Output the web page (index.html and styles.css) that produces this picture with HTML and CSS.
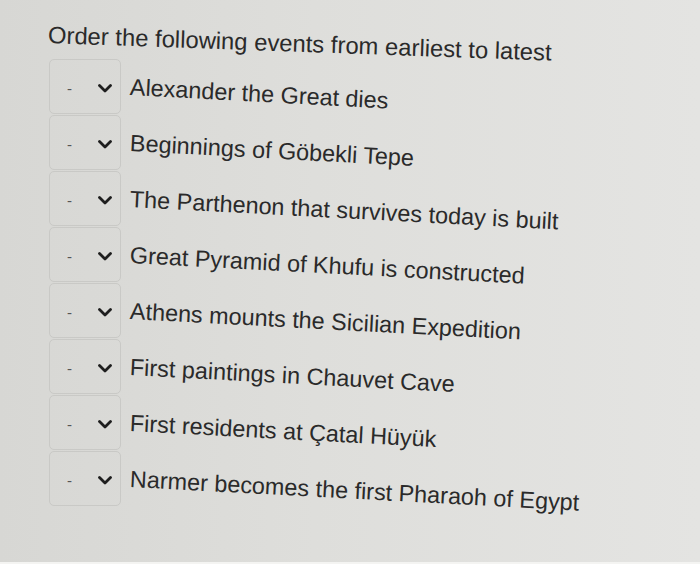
FILE: index.html
```html
<!DOCTYPE html>
<html lang="en">
<head>
<meta charset="utf-8">
<title>Order events</title>
<link rel="stylesheet" href="styles.css">
</head>
<body>
<main class="page">
  <h1 class="question">Order the following events from earliest to latest</h1>
  <ul class="items">
    <li class="item"><span class="select"><span class="dash">-</span><svg class="chev" viewBox="0 0 14 9" width="14" height="9"><polyline points="1.5,1.5 7,7 12.5,1.5"/></svg></span><span class="label">Alexander the Great dies</span></li>
    <li class="item"><span class="select"><span class="dash">-</span><svg class="chev" viewBox="0 0 14 9" width="14" height="9"><polyline points="1.5,1.5 7,7 12.5,1.5"/></svg></span><span class="label">Beginnings of Göbekli Tepe</span></li>
    <li class="item"><span class="select"><span class="dash">-</span><svg class="chev" viewBox="0 0 14 9" width="14" height="9"><polyline points="1.5,1.5 7,7 12.5,1.5"/></svg></span><span class="label">The Parthenon that survives today is built</span></li>
    <li class="item"><span class="select"><span class="dash">-</span><svg class="chev" viewBox="0 0 14 9" width="14" height="9"><polyline points="1.5,1.5 7,7 12.5,1.5"/></svg></span><span class="label">Great Pyramid of Khufu is constructed</span></li>
    <li class="item"><span class="select"><span class="dash">-</span><svg class="chev" viewBox="0 0 14 9" width="14" height="9"><polyline points="1.5,1.5 7,7 12.5,1.5"/></svg></span><span class="label">Athens mounts the Sicilian Expedition</span></li>
    <li class="item"><span class="select"><span class="dash">-</span><svg class="chev" viewBox="0 0 14 9" width="14" height="9"><polyline points="1.5,1.5 7,7 12.5,1.5"/></svg></span><span class="label">First paintings in Chauvet Cave</span></li>
    <li class="item"><span class="select"><span class="dash">-</span><svg class="chev" viewBox="0 0 14 9" width="14" height="9"><polyline points="1.5,1.5 7,7 12.5,1.5"/></svg></span><span class="label">First residents at Çatal Hüyük</span></li>
    <li class="item"><span class="select"><span class="dash">-</span><svg class="chev" viewBox="0 0 14 9" width="14" height="9"><polyline points="1.5,1.5 7,7 12.5,1.5"/></svg></span><span class="label">Narmer becomes the first Pharaoh of Egypt</span></li>
  </ul>
</main>
</body>
</html>
```

FILE: styles.css
```css
html, body {
  margin: 0;
  padding: 0;
  height: 100%;
}
body {
  background: linear-gradient(90deg, #d7d7d4 0%, #dededb 45%, #e4e4e2 100%);
  font-family: "Liberation Sans", Arial, sans-serif;
  color: #2a2a2a;
  border-bottom: 2px solid #f4f4f2;
  box-sizing: border-box;
  overflow: hidden;
}
.page {
  padding: 21px 0 0 48px;
}
.question {
  margin: 0 0 10px 0;
  font-size: 23.8px;
  line-height: 28px;
  font-weight: normal;
  transform: rotate(2deg);
  transform-origin: 0 50%;
}
.items {
  list-style: none;
  margin: 0;
  padding: 0 0 0 1px;
  display: flex;
  flex-direction: column;
  gap: 1px;
}
.item {
  display: flex;
  align-items: center;
  height: 55px;
}
.select {
  box-sizing: border-box;
  width: 72px;
  height: 55px;
  border: 1px solid #c9c9c6;
  border-radius: 5px;
  display: flex;
  align-items: center;
  padding: 3px 0 0 17px;
}
.dash {
  font-size: 15px;
  color: #555;
  width: 31px;
}
.chev {
  fill: none;
  stroke: #1e1e1e;
  stroke-width: 2.8;
  stroke-linecap: round;
  stroke-linejoin: round;
}
.label {
  margin-left: 9px;
  font-size: 23.4px;
  line-height: 28px;
  transform: rotate(3deg);
  transform-origin: 0 50%;
}
```
